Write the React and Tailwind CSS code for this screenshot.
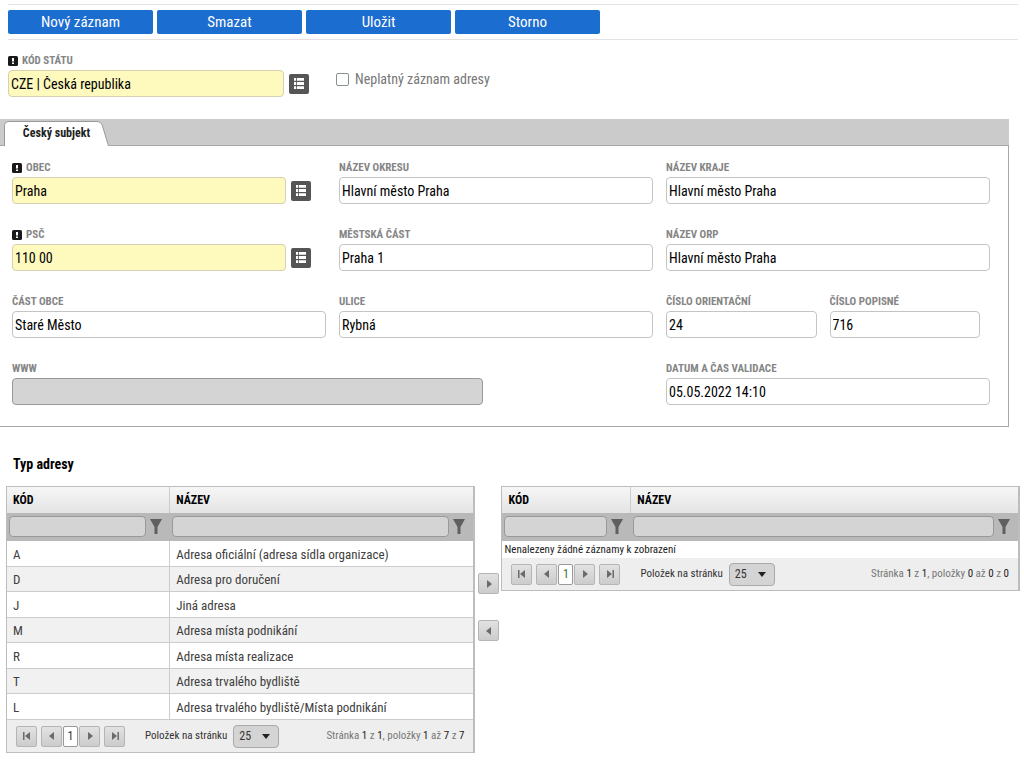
const COUNTRY_ACTIONS = ['Nový záznam', 'Smazat', 'Uložit', 'Storno'];

const ADDRESS_TYPES = [
    { code: 'A', name: 'Adresa oficiální (adresa sídla organizace)' },
    { code: 'D', name: 'Adresa pro doručení' },
    { code: 'J', name: 'Jiná adresa' },
    { code: 'M', name: 'Adresa místa podnikání' },
    { code: 'R', name: 'Adresa místa realizace' },
    { code: 'T', name: 'Adresa trvalého bydliště' },
    { code: 'L', name: 'Adresa trvalého bydliště/Místa podnikání' },
];

const ARROWS = {
    first: 'M1 1h1.5v8H1z M8 1v8L3 5z',
    prev: 'M7 1v8L2 5z',
    next: 'M3 1v8l5-4z',
    last: 'M7.500 1H9v8H7.500z M2 1v8l5-4z',
};

const inputVariants = {
    plain: 'bg-white border-[#c4c4c4]',
    required: 'bg-[#fef9bd] border-[#d5d0b4]',
    disabled: 'bg-[#d4d4d4] border-[#999999]',
};

function RequiredIcon() {
    return (
        <svg className="size-[10px] shrink-0" viewBox="0 0 10 10" aria-hidden="true">
            <rect width="10" height="10" rx="1.500" fill="#1a1a1a" />
            <path d="M4 2h2v3.500H4z M4 6.500h2v1.500H4z" fill="#fff" />
        </svg>
    );
}

function ListButton({ label }) {
    return (
        <button type="button" aria-label={label} className="size-[20px] shrink-0 rounded-xs bg-[#555555] flex items-center justify-center">
            <svg className="w-[10px] h-[11px]" viewBox="0 0 10 11" fill="#fff" aria-hidden="true">
                <path d="M0 0h2.200v2.800H0z M3 0h7v2.800H3z M0 4.100h2.200v2.800H0z M3 4.100h7v2.800H3z M0 8.200h2.200V11H0z M3 8.200h7V11H3z" />
            </svg>
        </button>
    );
}

function Field({ id, label, value = '', variant = 'plain', lookup = false, className = '' }) {
    return (
        <div className={className}>
            <label htmlFor={id} className="flex items-center gap-1 h-4 text-[11px] font-bold text-[#858585] uppercase">
                {variant === 'required' && <RequiredIcon />}
                {label}
            </label>
            <div className="flex items-center gap-[5px] mt-px">
                <input
                    id={id}
                    type="text"
                    defaultValue={value}
                    disabled={variant === 'disabled'}
                    className={`h-[27px] w-full min-w-0 rounded-sm border px-0.5 text-[14px] text-black ${inputVariants[variant]}`}
                />
                {lookup && <ListButton label={`Vybrat: ${label}`} />}
            </div>
        </div>
    );
}

function ArrowButton({ icon, label }) {
    return (
        <button type="button" aria-label={label} className="size-[21px] shrink-0 rounded-xs border border-[#b5b5b5] bg-linear-to-b from-[#e2e2e2] to-[#cccccc] flex items-center justify-center">
            <svg className="size-[10px]" viewBox="0 0 10 10" fill="#6b6b6b" aria-hidden="true">
                <path d={ARROWS[icon]} />
            </svg>
        </button>
    );
}

function FilterCell({ label }) {
    return (
        <td className="h-7 p-0 pb-0.5 bg-[#b9b9b9]">
            <div className="flex items-center pl-0.5">
                <input type="text" aria-label={label} className="h-[21px] flex-1 min-w-0 rounded-sm border border-[#999999] bg-[#d4d4d4] px-1 text-[13px]" />
                <button type="button" aria-label={`Filtr: ${label}`} className="w-6 h-5 pl-1 shrink-0 flex items-center">
                    <svg className="w-[12px] h-[15px]" viewBox="0 0 12 15" fill="#5f5f5f" aria-hidden="true">
                        <path d="M0 0h12L7.500 8V15H4.500V8z" />
                    </svg>
                </button>
            </div>
        </td>
    );
}

function Pager({ id, pages, from, to, total, activeClass }) {
    return (
        <div className="flex items-center h-[32px] px-[9px] bg-[#eeeeee] text-[11px] text-[#333333]">
            <div className="flex items-center gap-1">
                <ArrowButton icon="first" label="První stránka" />
                <div className="flex items-center gap-px">
                    <ArrowButton icon="prev" label="Předchozí stránka" />
                    <button type="button" className={`w-[15px] h-[21px] rounded-xs border border-[#999999] bg-white text-[12px] ${activeClass}`}>1</button>
                    <ArrowButton icon="next" label="Další stránka" />
                </div>
                <ArrowButton icon="last" label="Poslední stránka" />
            </div>
            <label htmlFor={id} className="ml-5 whitespace-nowrap">Položek na stránku</label>
            <div className="relative ml-1.5">
                <select id={id} className="appearance-none block w-[46px] h-[23px] rounded-sm border border-[#aaaaaa] bg-[#d4d4d4] pl-[5px] text-[12px] text-[#333333]">
                    <option>25</option>
                </select>
                <svg className="absolute right-[9px] top-[9px] w-[8px] h-[5px] pointer-events-none" viewBox="0 0 8 5" fill="#222" aria-hidden="true">
                    <path d="M0 0h8L4 5z" />
                </svg>
            </div>
            <p className="ml-auto whitespace-nowrap text-[#777777] [&_b]:font-normal [&_b]:text-[#222222]">
                Stránka <b>{pages}</b> z <b>{pages}</b>, položky <b>{from}</b> až <b>{to}</b> z <b>{total}</b>
            </p>
        </div>
    );
}

function TypeTable({ id, rows, codeWidth, activeClass = '' }) {
    return (
        <div className="border border-[#bdbdbd] border-r-2">
            <table className="w-full table-fixed border-separate border-spacing-0">
                <thead>
                    <tr className="bg-linear-to-b from-[#f6f6f6] to-[#e4e4e4] text-left text-[12px] text-black">
                        <th className={`h-[26px] p-0 pl-1.5 border-r border-[#cccccc] ${codeWidth}`}>KÓD</th>
                        <th className="h-[26px] p-0 pl-1.5">NÁZEV</th>
                    </tr>
                    <tr>
                        <FilterCell label="Kód" />
                        <FilterCell label="Název" />
                    </tr>
                </thead>
                <tbody className="text-[13px] text-[#404040]">
                    {rows.map((row) => (
                        <tr key={row.code} className="odd:h-[26px] even:h-[25px] even:bg-[#f1f1f1]">
                            <td className="p-0 pt-0.5 pl-1.5 border-r border-b border-[#cccccc]">{row.code}</td>
                            <td className="p-0 pt-0.5 pl-1.5 border-b border-[#cccccc]">{row.name}</td>
                        </tr>
                    ))}
                    {rows.length === 0 && (
                        <tr>
                            <td colSpan={2} className="h-[17px] p-0 pl-0.5 text-[11px] leading-4 text-[#222222]">Nenalezeny žádné záznamy k zobrazení</td>
                        </tr>
                    )}
                </tbody>
            </table>
            <Pager
                id={id}
                pages={1}
                from={rows.length ? 1 : 0}
                to={rows.length}
                total={rows.length}
                activeClass={activeClass}
            />
        </div>
    );
}

function SubjectPanel() {
    return (
        <section className="mt-[22px] mr-[15px]">
            <div className="h-[27px] bg-[#cbcbcb] border-b border-[#a8a8a8] pl-1 flex items-end">
                <button type="button" className="relative w-[105px] h-[24px] text-[12px] font-bold text-[#222222]">
                    <svg className="absolute inset-0 w-full h-[25px]" viewBox="0 0 105 25" aria-hidden="true">
                        <path d="M.5 25V5Q.5 .5 5 .5H93Q97 .5 98.500 5L104.500 25" fill="#fff" stroke="#999" />
                    </svg>
                    <span className="relative">Český subjekt</span>
                </button>
            </div>
            <div className="border-r border-b border-[#a8a8a8] pt-[14px] pb-[21px] pl-3 pr-[18px]">
                <div className="grid grid-cols-[314fr_314fr_324fr] gap-x-[13px] gap-y-[23px]">
                    <Field id="obec" label="Obec" value="Praha" variant="required" lookup className="mr-[15px]" />
                    <Field id="okres" label="Název okresu" value="Hlavní město Praha" />
                    <Field id="kraj" label="Název kraje" value="Hlavní město Praha" />
                    <Field id="psc" label="PSČ" value="110 00" variant="required" lookup className="mr-[15px]" />
                    <Field id="mestska-cast" label="Městská část" value="Praha 1" />
                    <Field id="orp" label="Název ORP" value="Hlavní město Praha" />
                    <Field id="cast-obce" label="Část obce" value="Staré Město" />
                    <Field id="ulice" label="Ulice" value="Rybná" />
                    <div className="grid grid-cols-2 gap-x-[13px] mr-2.5">
                        <Field id="cislo-orientacni" label="Číslo orientační" value="24" />
                        <Field id="cislo-popisne" label="Číslo popisné" value="716" />
                    </div>
                    <Field id="www" label="WWW" variant="disabled" className="col-span-2 w-3/4 pr-2.5" />
                    <Field id="validace" label="Datum a čas validace" value="05.05.2022 14:10" />
                </div>
            </div>
        </section>
    );
}

export default function App() {
    return (
        <main className="bg-white pb-2 font-['Roboto_Condensed',Roboto,sans-serif]">
            <div className="mt-1 ml-2 mr-1.5 flex gap-1 border-y border-[#e2e2e2] py-[5px]">
                {COUNTRY_ACTIONS.map((action) => (
                    <button key={action} type="button" className="w-[145px] h-6 rounded-xs bg-[#1c6dd0] text-[15px] leading-6 text-white">
                        {action}
                    </button>
                ))}
            </div>

            <div className="mt-[13px] ml-2 flex">
                <Field id="stat" label="Kód státu" value="CZE | Česká republika" variant="required" lookup className="w-[301px]" />
                <label className="ml-[27px] mt-4 flex items-center gap-1.5 h-5 text-[14px] text-[#777777]">
                    <input type="checkbox" className="appearance-none size-[13px] rounded-xs border border-[#8a8f94] bg-white" />
                    Neplatný záznam adresy
                </label>
            </div>

            <SubjectPanel />

            <h2 className="mt-[27px] ml-[13px] text-[14px] leading-5 font-bold text-black">Typ adresy</h2>
            <div className="mt-3 ml-1.5 mr-1 grid grid-cols-[469fr_20px_518fr] gap-x-[3px] items-start">
                <TypeTable id="assigned-size" rows={ADDRESS_TYPES} codeWidth="w-[35%]" />
                <div className="mt-[87px] flex flex-col gap-[26px]">
                    <ArrowButton icon="next" label="Přesunout doprava" />
                    <ArrowButton icon="prev" label="Přesunout doleva" />
                </div>
                <TypeTable id="selected-size" rows={[]} codeWidth="w-[25%]" activeClass="text-[#3c7a1e]" />
            </div>
        </main>
    );
}
